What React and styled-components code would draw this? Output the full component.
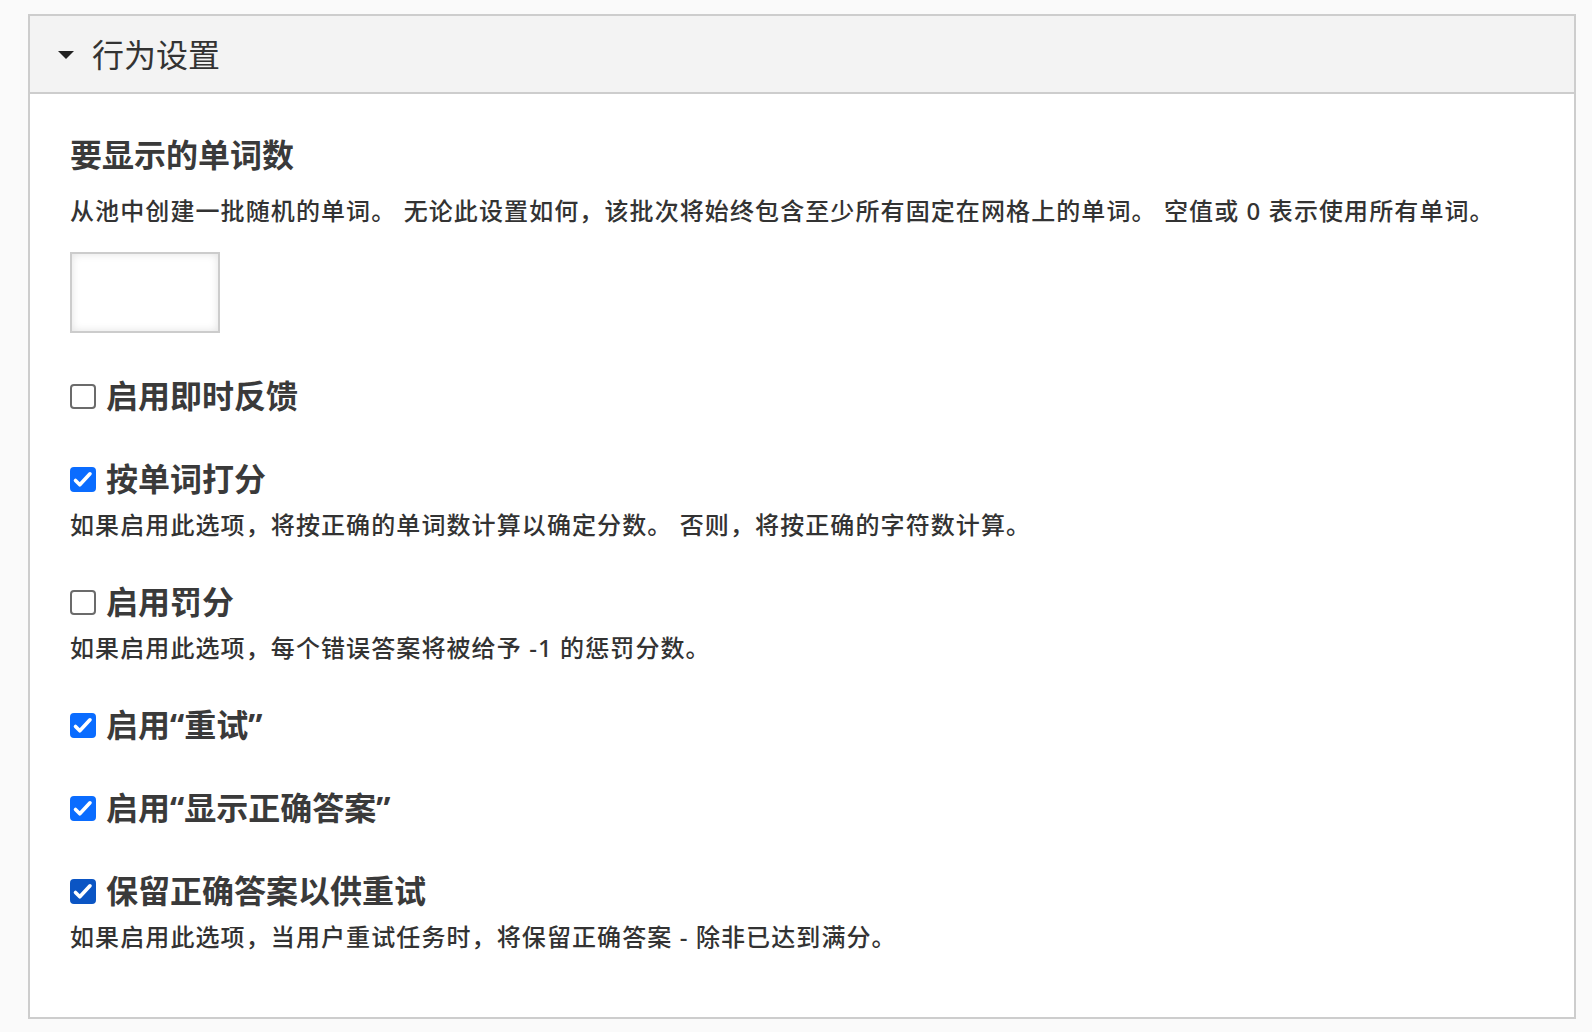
import React, { useState } from "react";
import styled, { createGlobalStyle } from "styled-components";

const GlobalStyle = createGlobalStyle`
  html, body {
    margin: 0;
    padding: 0;
    background: #fafafa;
  }
  body {
    font-family: "Noto Sans", "Noto Sans CJK SC", sans-serif;
    color: #333;
  }
`;

const Page = styled.div`
  padding: 14px 16px 12px 28px;
`;

const Panel = styled.section`
  border: 2px solid #cdcdcd;
  background: #fff;
`;

const Header = styled.div`
  display: flex;
  align-items: center;
  gap: 18px;
  height: 78px;
  padding: 2px 0 0 28px;
  box-sizing: border-box;
  background: #f3f3f3;
  border-bottom: 2px solid #cdcdcd;
  cursor: pointer;
`;

const Arrow = styled.span`
  width: 0;
  height: 0;
  border-left: 8px solid transparent;
  border-right: 8px solid transparent;
  border-top: 8px solid ${p => (p.open ? "#222" : "transparent")};
`;

const Title = styled.h2`
  margin: 0;
  font-size: 32px;
  font-weight: 400;
  line-height: 40px;
  color: #333;
`;

const Body = styled.div`
  display: flex;
  flex-direction: column;
  padding: 41px 40px 64px;
`;

const Field = styled.div`
  display: flex;
  flex-direction: column;
  margin-top: ${p => p.gap || 0}px;
`;

const Heading = styled.div`
  font-size: 32px;
  font-weight: 700;
  line-height: 40px;
  color: #3a3a3a;
`;

const Desc = styled.div`
  margin-top: ${p => p.top || 10}px;
  font-size: 24px;
  font-weight: 500;
  line-height: 32px;
  letter-spacing: 1.1px;
  color: #333;
`;

const NumberInput = styled.input`
  margin-top: 25px;
  width: 150px;
  height: 81px;
  box-sizing: border-box;
  border: 2px solid #cccccc;
  background: #fff;
  box-shadow: inset 0 0 8px rgba(0, 0, 0, 0.12);
  font-size: 24px;
  padding: 0 12px;
  outline: none;
`;

const Row = styled.label`
  display: flex;
  align-items: center;
  gap: 10px;
  height: 40px;
  cursor: pointer;
`;

const Box = styled.span`
  display: flex;
  align-items: center;
  justify-content: center;
  width: 26px;
  height: 25px;
  box-sizing: border-box;
  border-radius: 4px;
  border: 2px solid ${p => (p.checked ? (p.focused ? "#0b55c4" : "#0a6cff") : "#6b6b6b")};
  background: ${p => (p.checked ? (p.focused ? "#0b55c4" : "#0a6cff") : "#fff")};
  flex-shrink: 0;
`;

const HiddenInput = styled.input`
  display: none;
`;

const Label = styled.span`
  font-size: 32px;
  font-weight: 700;
  line-height: 40px;
  color: #3a3a3a;
`;

const Check = ({ label, checked, focused, onToggle }) => (
  <Row>
    <HiddenInput type="checkbox" checked={checked} onChange={onToggle} />
    <Box checked={checked} focused={focused}>
      {checked && (
        <svg width="22" height="21" viewBox="2 2 22 21">
          <path d="M5.5 13.5 L9.8 17.8 L20 6.8" fill="none" stroke="#fff" strokeWidth="3.6" strokeLinecap="round" strokeLinejoin="round" />
        </svg>
      )}
    </Box>
    <Label>{label}</Label>
  </Row>
);

const initial = [
  { id: "feedback", label: "启用即时反馈", checked: false },
  { id: "perWord", label: "按单词打分", checked: true, desc: "如果启用此选项，将按正确的单词数计算以确定分数。 否则，将按正确的字符数计算。" },
  { id: "penalty", label: "启用罚分", checked: false, desc: "如果启用此选项，每个错误答案将被给予 -1 的惩罚分数。" },
  { id: "retry", label: "启用“重试”", checked: true },
  { id: "solution", label: "启用“显示正确答案”", checked: true },
  { id: "keep", label: "保留正确答案以供重试", checked: true, focused: true, desc: "如果启用此选项，当用户重试任务时，将保留正确答案 - 除非已达到满分。" },
];

export default function App() {
  const [open, setOpen] = useState(true);
  const [items, setItems] = useState(initial);

  const toggle = id =>
    setItems(items.map(it => (it.id === id ? { ...it, checked: !it.checked } : it)));

  return (
    <Page>
      <GlobalStyle />
      <Panel>
        <Header onClick={() => setOpen(!open)}>
          <Arrow open />
          <Title>行为设置</Title>
        </Header>
        {open && (
          <Body>
            <Field>
              <Heading>要显示的单词数</Heading>
              <Desc top={20}>
                从池中创建一批随机的单词。 无论此设置如何，该批次将始终包含至少所有固定在网格上的单词。 空值或 0 表示使用所有单词。
              </Desc>
              <NumberInput type="text" />
            </Field>
            {items.map((it, i) => (
              <Field key={it.id} gap={i > 0 && items[i - 1].desc ? 41 : 43}>
                <Check label={it.label} checked={it.checked} focused={it.focused} onToggle={() => toggle(it.id)} />
                {it.desc && <Desc>{it.desc}</Desc>}
              </Field>
            ))}
          </Body>
        )}
      </Panel>
    </Page>
  );
}
